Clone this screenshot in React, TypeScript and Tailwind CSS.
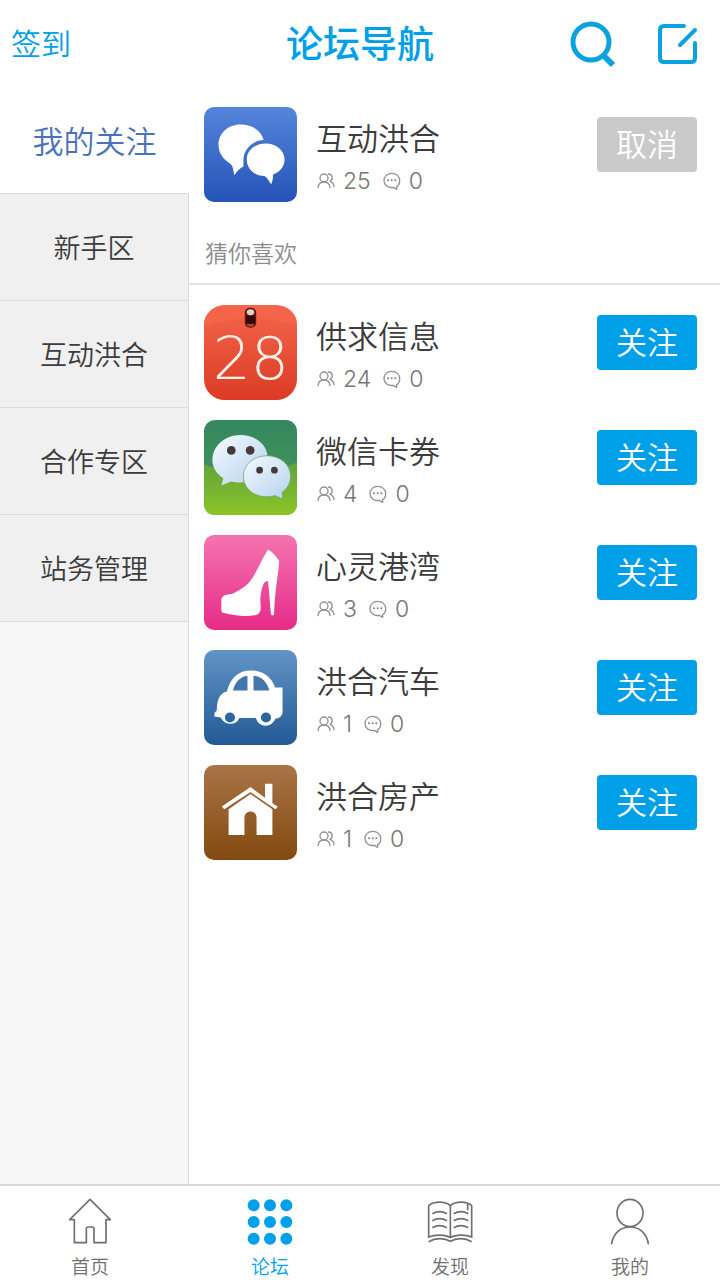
import React, { useState } from 'react';

const TileFrame = ({ id, from, to, radius = 30, children }: { id: string, from: string, to: string, radius?: number, children: React.ReactNode }) => (
    <svg viewBox="0 0 276 284" preserveAspectRatio="none" className="w-[93px] h-[95px] shrink-0" aria-hidden="true">
        <defs>
            <linearGradient id={id} x1="0" y1="0" x2="0" y2="1">
                <stop offset="0" stopColor={from} />
                <stop offset="1" stopColor={to} />
            </linearGradient>
        </defs>
        <rect width="276" height="284" rx={radius} fill={`url(#${id})`} />
        {children}
    </svg>
);

const ChatTile = () => (
    <TileFrame id="tile-chat" from="#5585dc" to="#2553b8">
        <path fill="#fff" d="M108 52 C146 52 170 72 177 99 C150 98 118 122 117 158 L117 178 C107 183 97 193 90 204 C87 190 87 180 80 171 C57 157 43 138 43 113 C43 78 72 52 108 52Z" />
        <path fill="#fff" d="M183 109 C215 109 239 130 239 157 C239 181 224 194 205 202 C205 213 204 222 199 231 C193 222 189 212 180 206 C150 206 127 186 127 157 C127 130 151 109 183 109Z" />
    </TileFrame>
);

const CalendarTile = () => (
    <TileFrame id="tile-calendar" from="#f4674c" to="#dc3a24" radius={62}>
        <path fill="#f56449" d="M0 62 C0 24 28 2 62 2 H214 C248 2 276 24 276 58 C190 34 86 34 0 62Z" />
        <rect x="121" y="8" width="34" height="60" rx="15" fill="#5c1712" />
        <rect x="125" y="34" width="26" height="21" rx="4" fill="#2e0908" />
        <ellipse cx="138" cy="22" rx="11" ry="9" fill="#e2cdca" />
        <rect x="128" y="57" width="20" height="7" rx="3" fill="#b34434" />
        <text x="139" y="222" textAnchor="middle" fill="#fff1e6" className="font-['DejaVu_Sans',sans-serif] font-extralight text-[178px]">28</text>
    </TileFrame>
);

const WechatTile = () => (
    <TileFrame id="tile-wechat" from="#34875d" to="#4b9b5b" radius={34}>
        <defs>
            <linearGradient id="wechat-grass" x1="0" y1="0" x2="0" y2="1">
                <stop offset="0" stopColor="#5fa23e" />
                <stop offset="1" stopColor="#8cc525" />
            </linearGradient>
            <linearGradient id="wechat-bubble" x1="0" y1="0" x2="1" y2="1">
                <stop offset="0" stopColor="#f5faff" />
                <stop offset="1" stopColor="#b5d2ee" />
            </linearGradient>
        </defs>
        <path fill="url(#wechat-grass)" d="M0 132 C80 166 196 166 276 126 V250 Q276 284 242 284 H34 Q0 284 0 250Z" />
        <path fill="url(#wechat-bubble)" d="M108 45 C152 45 186 72 188 106 C145 109 114 136 118 186 C105 188 92 187 80 184 L52 196 L57 174 C38 161 25 143 25 120 C25 78 62 45 108 45Z" />
        <path fill="url(#wechat-bubble)" stroke="#6aa46e" strokeWidth="2" d="M186 107 C226 107 257 133 257 169 C257 189 248 204 232 216 L233 236 L211 226 C161 240 117 210 117 169 C117 133 147 107 186 107Z" />
        <g fill="#45393c">
            <circle cx="81" cy="91" r="13" />
            <circle cx="137" cy="91" r="13" />
            <circle cx="165" cy="150" r="10" />
            <circle cx="209" cy="150" r="10" />
        </g>
    </TileFrame>
);

const ShoeTile = () => (
    <TileFrame id="tile-shoe" from="#f574b0" to="#e62b89">
        <path fill="#fff" d="M190 43 C206 52 216 66 223 78 C222 113 211 155 208 238 Q203 243 199 238 C195 200 194 173 190 139 C178 133 170 157 167 193 C169 215 171 234 155 239 C124 245 92 242 54 232 Q50 228 52 201 C49 186 58 179 72 178 C93 175 104 164 118 156 C148 137 158 95 190 43Z" />
    </TileFrame>
);

const CarTile = () => (
    <TileFrame id="tile-car" from="#6294c6" to="#225a95">
        <path fill="#fff" d="M68 124 C78 82 104 61 138 61 C173 61 200 80 211 112 H233 V175 C235 193 229 203 212 205 A30 30 0 0 1 154 203 H105 A30 30 0 0 1 50 202 L31 199 V188 L38 181 C38 151 46 128 68 124Z" />
        <path fill="#4376ad" d="M86 121 C92 96 107 80 129 77 V121Z M147 77 C171 79 187 96 194 121 H147Z" />
        <circle cx="77" cy="202" r="15" fill="#2d649e" />
        <circle cx="184" cy="202" r="15" fill="#2d649e" />
    </TileFrame>
);

const HouseTile = () => (
    <TileFrame id="tile-house" from="#aa7447" to="#824a10">
        <path fill="#fff" d="M138 66 L181 98 V56 H203 V114 L219 125 L212 132 L138 81 L60 132 L53 124Z" />
        <path fill="#fff" d="M138 87 L203 132 V209 H156 V158 C156 133 120 133 120 158 V209 H73 V132Z" />
    </TileFrame>
);

const MembersIcon = () => (
    <svg viewBox="-3 0 57 48" className="w-[19px] h-4" fill="none" stroke="#929292" strokeWidth="4" strokeLinecap="round" aria-hidden="true">
        <circle cx="21" cy="15" r="12" />
        <path d="M3 44 C4 33 12 27 21 27 C30 27 38 33 39 44" />
        <path d="M34 3 C47 3 49 19 40 25 C48 29 51 34 51 41" />
    </svg>
);

const CommentIcon = () => (
    <svg viewBox="0 0 54 54" className="size-[18px]" fill="none" stroke="#929292" strokeWidth="4" strokeLinejoin="round" aria-hidden="true">
        <path d="M26 4 C40 4 50 13 50 26 C50 36 46 41 41 44 V52 L31 46 C15 49 3 39 3 26 C3 13 13 4 26 4Z" />
        <g fill="#808080" stroke="none">
            <circle cx="15" cy="25" r="3" />
            <circle cx="26" cy="25" r="3" />
            <circle cx="37" cy="25" r="3" />
        </g>
    </svg>
);

const HomeIcon = () => (
    <svg viewBox="0 0 144 144" className="size-12" fill="none" stroke="#707070" strokeWidth="5" strokeLinejoin="round" aria-hidden="true">
        <path d="M72 4 L11 65 H25 V134 H61 V92 Q61 87 66 87 H78 Q84 87 84 92 V134 H120 V65 H133Z" />
    </svg>
);

const GridIcon = () => (
    <svg viewBox="0 0 144 144" className="size-12" fill="#00a0e9" aria-hidden="true">
        {[22, 72, 122].map((y) => [23, 72, 121].map((x) => (
            <circle key={`${x}-${y}`} cx={x} cy={y} r="18" />
        )))}
    </svg>
);

const BookIcon = () => (
    <svg viewBox="0 0 144 144" className="size-12" fill="none" stroke="#707070" strokeWidth="5" aria-hidden="true">
        <path d="M73 23 C58 9 24 9 8 23 V117 C26 109 58 109 73 119 C89 109 120 109 137 117 V23 C121 9 89 9 73 23 V119" />
        <path d="M8 131 C28 119 55 119 73 130 C91 119 117 119 137 131" />
        <path d="M19 47 Q41 35 63 47 M19 68 Q41 56 63 68 M19 89 Q41 77 63 89 M83 47 Q105 35 127 47 M83 68 Q105 56 127 68 M83 89 Q105 77 127 89" />
        <path d="M125 15 V37" />
    </svg>
);

const UserIcon = () => (
    <svg viewBox="0 0 144 144" className="size-12" fill="none" stroke="#707070" strokeWidth="5" strokeLinecap="round" aria-hidden="true">
        <ellipse cx="72" cy="45" rx="39" ry="41" />
        <path d="M17 137 C22 105 44 87 72 87 C100 87 122 105 127 137" />
    </svg>
);

const categories = ['我的关注', '新手区', '互动洪合', '合作专区', '站务管理'];

const suggested = [
    { name: '供求信息', members: 24, comments: 0, tile: <CalendarTile /> },
    { name: '微信卡券', members: 4, comments: 0, tile: <WechatTile /> },
    { name: '心灵港湾', members: 3, comments: 0, tile: <ShoeTile /> },
    { name: '洪合汽车', members: 1, comments: 0, tile: <CarTile /> },
    { name: '洪合房产', members: 1, comments: 0, tile: <HouseTile /> },
];

const tabs = [
    { label: '首页', icon: <HomeIcon /> },
    { label: '论坛', icon: <GridIcon /> },
    { label: '发现', icon: <BookIcon /> },
    { label: '我的', icon: <UserIcon /> },
];

interface ForumRowProps {
    name: string;
    members: number;
    comments: number;
    tile: React.ReactNode;
    initialFollowed?: boolean;
}

const ForumRow = ({ name, members, comments, tile, initialFollowed = false }: ForumRowProps) => {
    const [followed, setFollowed] = useState(initialFollowed);

    return (
        <li className="flex items-start h-[95px]">
            {tile}
            <div className="flex-1 min-w-0 pl-[19px] pt-[6px]">
                <h2 className="text-[31px] leading-12 text-[#3c3c3c]">{name}</h2>
                <div className="flex items-center font-['Inter',sans-serif] font-light text-[23px] leading-10 text-[#777]">
                    <MembersIcon />
                    <span className="ml-2">{members}</span>
                    <span className="ml-3 flex items-center">
                        <CommentIcon />
                        <span className="ml-2">{comments}</span>
                    </span>
                </div>
            </div>
            <button
                type="button"
                onClick={() => setFollowed(!followed)}
                className={`mt-[10px] pb-1 w-[100px] h-[55px] shrink-0 rounded-sm text-[31px] leading-12 text-white ${followed ? 'bg-[#cacaca]' : 'bg-[#00a0e9]'}`}
            >
                {followed ? '取消' : '关注'}
            </button>
        </li>
    );
};

export default function App() {
    const [category, setCategory] = useState(0);
    const [tab, setTab] = useState(1);

    return (
        <div className="min-h-screen flex flex-col bg-white font-['Noto_Sans_CJK_SC',sans-serif] font-[350]">
            <header className="h-[87px] grid grid-cols-[1fr_auto_1fr] items-center px-[11px] text-[#00a0e9]">
                <button type="button" className="justify-self-start pb-1 text-[30px] leading-12">签到</button>
                <h1 className="pb-1 text-[37px] leading-12 font-medium">论坛导航</h1>
                <div className="flex items-center justify-self-end gap-10 pr-[10px]">
                    <button type="button" aria-label="搜索">
                        <svg viewBox="0 0 48 48" className="size-12" fill="none" stroke="#0ca2e0" strokeWidth="5" aria-hidden="true">
                            <circle cx="22" cy="22" r="18" />
                            <path d="M35 36 L44 45" strokeWidth="6" />
                        </svg>
                    </button>
                    <button type="button" aria-label="发帖">
                        <svg viewBox="0 0 42 42" className="size-[42px]" fill="none" stroke="#0ca2e0" strokeWidth="4" strokeLinecap="round" aria-hidden="true">
                            <path d="M27 3 H7 Q3 3 3 7 V35 Q3 39 7 39 H34 Q38 39 38 35 V20 M38 7 L23 22" />
                        </svg>
                    </button>
                </div>
            </header>

            <div className="flex-1 flex">
                <nav className="w-[189px] shrink-0 flex flex-col" aria-label="版块">
                    {categories.map((item, i) => (
                        <button
                            key={item}
                            type="button"
                            onClick={() => setCategory(i)}
                            className={`h-[107px] border-b border-[#dcdcdc] ${category === i ? 'bg-white text-[31px] text-[#4a72b8]' : 'border-r bg-[#f0f0f0] text-[27px] text-[#3c3c3c]'}`}
                        >
                            {item}
                        </button>
                    ))}
                    <div className="flex-1 bg-[#f6f6f6] border-r border-[#dcdcdc]"></div>
                </nav>

                <main className="flex-1 min-w-0 pt-5">
                    <ul className="pl-[15px] pr-[23px]">
                        <ForumRow name="互动洪合" members={25} comments={0} tile={<ChatTile />} initialFollowed />
                    </ul>
                    <div className="mt-5 h-[63px] pl-4 border-b-2 border-[#e4e4e4] flex items-center text-[23px] text-[#8c8c8c]">猜你喜欢</div>
                    <ul className="mt-5 pl-[15px] pr-[23px] flex flex-col gap-5">
                        {suggested.map((forum) => <ForumRow key={forum.name} {...forum} />)}
                    </ul>
                </main>
            </div>

            <footer className="h-24 border-t-2 border-[#d8d8d8] grid grid-cols-4">
                {tabs.map((item, i) => (
                    <button
                        key={item.label}
                        type="button"
                        onClick={() => setTab(i)}
                        className={`flex flex-col items-center pt-3 text-[19px] leading-10 ${tab === i ? 'text-[#00a0e9]' : 'text-[#707070]'}`}
                    >
                        {item.icon}
                        {item.label}
                    </button>
                ))}
            </footer>
        </div>
    );
}
